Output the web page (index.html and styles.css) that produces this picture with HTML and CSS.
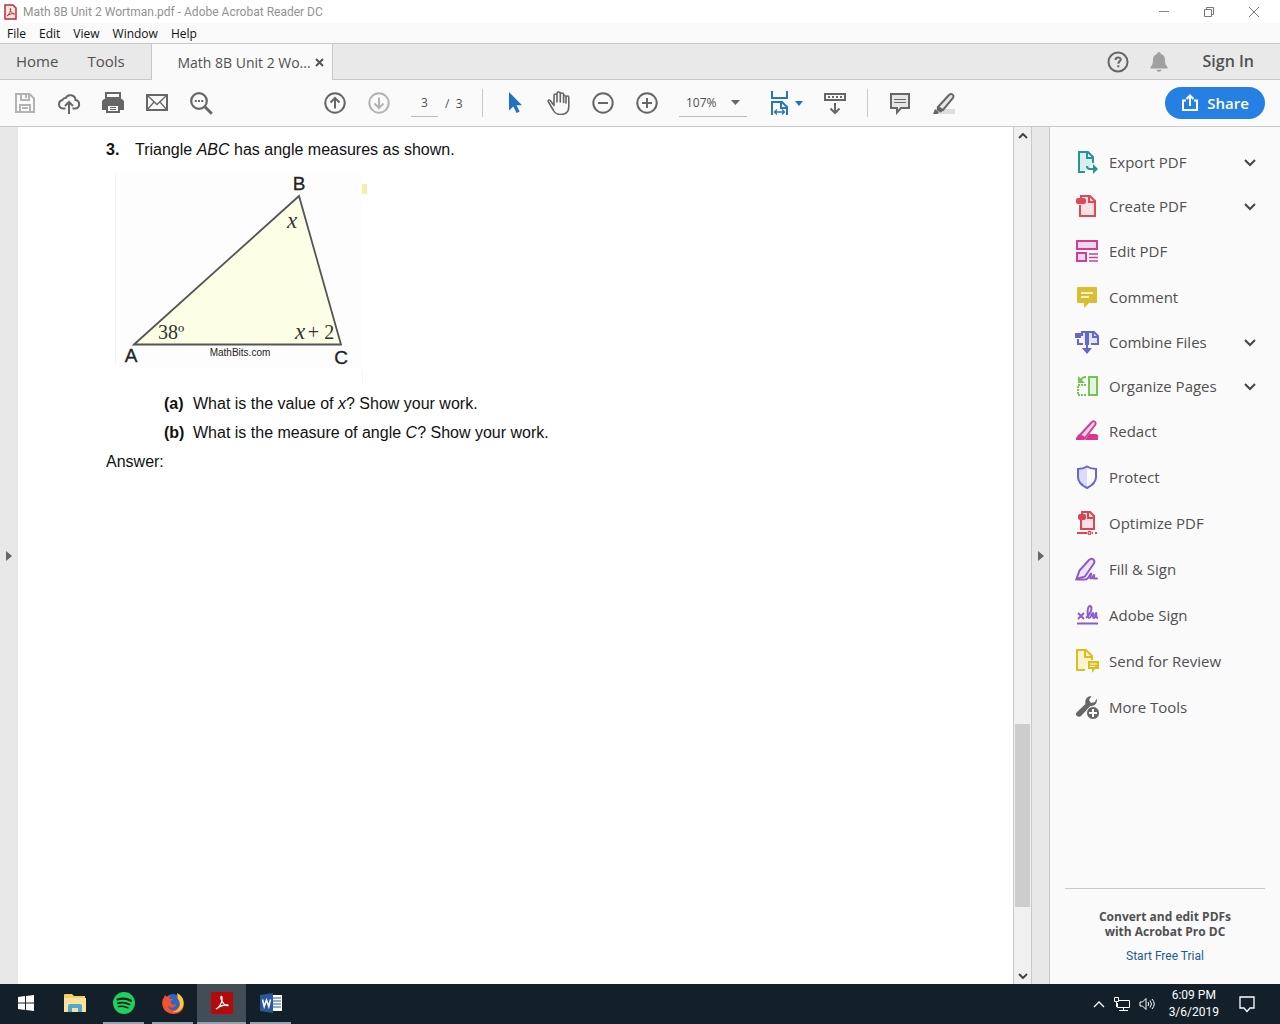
FILE: index.html
```html
<!DOCTYPE html>
<html lang="en">
    <head>
        <meta charset="UTF-8">
        <title>Math 8B Unit 2 Wortman.pdf - Adobe Acrobat Reader DC</title>
        <link rel="stylesheet" href="styles.css">
    </head>
    <body>
        <header class="titlebar">
            <svg class="app-icon" width="13" height="16" viewBox="0 0 13 16"><path d="M1 1h8l3 3v11H1z" fill="#fbe9e9" stroke="#c22a2f" stroke-width="1.5"/><path d="M3 12c2-1 4-5 3.500-7.500C5.500 6 8 10 10.500 10 8 9 5 10.500 3 12z" fill="none" stroke="#c22a2f"/></svg>
            <span class="title">Math 8B Unit 2 Wortman.pdf - Adobe Acrobat Reader DC</span>
            <div class="window-buttons">
                <button aria-label="Minimize"><svg width="12" height="12"><path d="M1 5.500h10" stroke="#888"/></svg></button>
                <button aria-label="Restore"><svg width="12" height="12" fill="none" stroke="#777"><path d="M1.500 3.500h7v7h-7zM3.500 3.500v-2h7v7h-2"/></svg></button>
                <button aria-label="Close"><svg width="12" height="12"><path d="M1 1l10 10M11 1L1 11" stroke="#777"/></svg></button>
            </div>
        </header>

        <nav class="menubar">
            <a href="#">File</a>
            <a href="#">Edit</a>
            <a href="#">View</a>
            <a href="#">Window</a>
            <a href="#">Help</a>
        </nav>

        <div class="tabbar">
            <a class="tab" href="#">Home</a>
            <a class="tab tab-tools" href="#">Tools</a>
            <div class="tab-open">
                <a href="#">Math 8B Unit 2 Wo...</a>
                <button aria-label="Close tab"><svg width="9" height="9"><path d="M1 1l7 7M8 1L1 8" stroke="#555" stroke-width="2"/></svg></button>
            </div>
            <div class="account">
                <button class="help" aria-label="Help"><svg width="22" height="22" fill="none" stroke="#666" stroke-width="2"><circle cx="11" cy="11" r="9.500"/><path d="M8.500 9c0-3.500 5.200-3.200 5.200-.5 0 1.800-2.400 1.900-2.400 4.300M11.300 14.200v2"/></svg></button>
                <button aria-label="Notifications"><svg width="18" height="20"><path d="M9 0c1.200 0 1.700.8 1.700 1.800C13.800 2.600 15 5 15 8c0 4 1 5.500 2.500 7v1.500H.5V15C2 13.500 3 12 3 8c0-3 1.200-5.400 4.300-6.200C7.300.8 7.800 0 9 0zM6.500 17.700h5c-.5 2.700-4.500 2.700-5 0z" fill="#a0a0a0"/></svg></button>
                <a class="sign-in" href="#">Sign In</a>
            </div>
        </div>

        <div class="toolbar">
            <button aria-label="Save"><svg width="24" height="24" fill="none" stroke="#b3b3b3" stroke-width="2"><path d="M3 3h13.500L21 7.500V21H3zM8 3v6h8V3M7 21v-7h10v7"/><path d="M13 4v3M9 17h6" /></svg></button>
            <button aria-label="Upload"><svg width="24" height="24" fill="none" stroke="#666" stroke-width="2"><path d="M8.500 17.500H6A4.300 4.300 0 0 1 5.500 9 3.200 3.200 0 0 1 8.700 7 5.200 5.200 0 0 1 18.500 9a4.300 4.300 0 0 1 0 8.500h-3M12 23V11M8 15l4-4 4 4"/></svg></button>
            <button aria-label="Print"><svg width="24" height="24"><path d="M5 2h14v5H5z" fill="#fafafa" stroke="#666" stroke-width="2"/><path d="M3 8h18l2 2v9h-4v-5H5v5H1v-9z" fill="#666"/><path d="M6 14h12v7H6z" fill="#fafafa" stroke="#666" stroke-width="2"/><path d="M9 16.500h6M9 18.500h6" stroke="#666"/></svg></button>
            <button aria-label="Email"><svg width="24" height="24" fill="none" stroke="#666"><path d="M2 4h20v15H2z" stroke-width="2"/><path d="M2.500 4.500l9.500 9 9.500-9M2.500 18.500L9 11M21.500 18.500L15 11" stroke-width="1.300"/></svg></button>
            <button aria-label="Find"><svg width="24" height="24" fill="none" stroke="#666"><circle cx="10" cy="10" r="7.800" stroke-width="2.200"/><path d="M15.800 15.800l7 7" stroke-width="3"/><path d="M5.800 10h2M9 10h2M12.200 10h2" stroke-width="2"/></svg></button>

            <button class="page-up" aria-label="Previous page"><svg width="24" height="24" fill="none" stroke="#666" stroke-width="2"><circle cx="12" cy="12" r="9.700"/><path d="M12 17.500V7.500M7.500 11.500L12 7l4.500 4.500"/></svg></button>
            <button aria-label="Next page"><svg width="24" height="24" fill="none" stroke="#b3b3b3" stroke-width="2"><circle cx="12" cy="12" r="9.700"/><path d="M12 6.500v10M7.500 12.500L12 17l4.500-4.500"/></svg></button>
            <div class="page-number">
                <input type="text" value="3" aria-label="Page number">
                <span>/&nbsp; 3</span>
            </div>
            <div class="separator"></div>
            <button aria-label="Select"><svg width="24" height="24"><path d="M6 1v18.500l4.300-4 3.300 6.500 3-1.500-3.100-6.300H19z" fill="#2170c4"/></svg></button>
            <button aria-label="Hand"><svg width="24" height="24" fill="none" stroke="#666" stroke-width="1.600" stroke-linecap="round"><path d="M7 14.500L3.500 9.800C2 8.200.5 9.300 1.500 11l5 8.500c1.200 2.500 3.500 4 7 4 5 0 8.300-2.500 8.300-8V6.500c0-2-2.800-2-2.800 0V12M7 14V4.500c0-2 3-2 3 0V11M10 10V2.500c0-2 3.300-2 3.300 0V11M13.300 3.500c0-2 3.300-2 3.300 0L19 5.500M16.600 4v7.500"/></svg></button>
            <button aria-label="Zoom out"><svg width="24" height="24" fill="none" stroke="#666" stroke-width="2"><circle cx="12" cy="12" r="9.700"/><path d="M7 12h10"/></svg></button>
            <button aria-label="Zoom in"><svg width="24" height="24" fill="none" stroke="#666" stroke-width="2"><circle cx="12" cy="12" r="9.700"/><path d="M7 12h10M12 7v10"/></svg></button>
            <div class="zoom-level">
                <select aria-label="Zoom level"><option>107%</option></select>
                <svg width="9" height="5"><path d="M0 0h9L4.500 5z" fill="#666"/></svg>
            </div>
            <button class="fit" aria-label="Fit width">
                <svg width="24" height="26" fill="none" stroke="#2a74b8" stroke-width="2"><path d="M4 1v7h15V1M4 25V12h10l5 5v8M13 12v6h6"/><path d="M7 22h9M9 19.500L6.500 22 9 24.500M14 19.500l2.500 2.500-2.500 2.500" stroke-width="1.300"/></svg>
                <svg width="8" height="5"><path d="M0 0h8L4 5z" fill="#2170c4"/></svg>
            </button>
            <button aria-label="Read mode"><svg width="24" height="24" fill="none" stroke="#666" stroke-width="2"><path d="M2 3h20v6H2z"/><path d="M5 6h2M9 6h2M13 6h2M17 6h2M12 12v9M7.500 17.500L12 22l4.500-4.500"/></svg></button>
            <div class="separator"></div>
            <button aria-label="Comment"><svg width="24" height="24"><path d="M3 3h18v14h-8l-4 4.500V17H3z" fill="#e6e6e6" stroke="#666" stroke-width="2"/><path d="M6 8.500h12M6 11.500h12" stroke="#666"/></svg></button>
            <button aria-label="Highlight"><svg width="24" height="24"><path d="M10 18h13v5H4z" fill="#ddd"/><path d="M6 16L16.500 4.500c2.500-3 6.500-.5 4.300 2.700L11 19z" fill="#e6e6e6" stroke="#666" stroke-width="2"/><path d="M5.500 15l6 4.500-3 2-4-2.500zM3 18l4 3.200L5.500 23H1z" fill="#666"/></svg></button>
            <button class="share">
                <svg width="18" height="18" fill="none" stroke="#fff" stroke-width="2"><path d="M5 6.500H2V16h14V6.500h-3M9 12V2M5.500 5L9 1.500 12.500 5"/></svg>
                Share
            </button>
        </div>

        <main class="workspace">
            <button class="gutter" aria-label="Show navigation pane"><svg width="6" height="12"><path d="M0 1l6 5-6 5z" fill="#666"/></svg></button>

            <section class="page">
                <p class="question"><b>3.</b>Triangle <i>ABC</i> has angle measures as shown.</p>
                <svg class="figure" width="262" height="216" viewBox="0 0 262 216">
                    <rect x="10" y="4" width="246" height="196" fill="#fdfdfd"/>
                    <path d="M9.500 4v194M256.500 202v14" stroke="#f3f3f3"/>
                    <path d="M28 176.500L193 28l42 148.500z" fill="#fdfee6" stroke="#555" stroke-width="1.800"/>
                    <rect x="256" y="16" width="5" height="10" fill="#f0f0a8"/>
                    <g class="vertex">
                        <text x="193" y="22">B</text>
                        <text x="25" y="194">A</text>
                        <text x="235" y="196">C</text>
                    </g>
                    <g class="angle">
                        <text class="variable" x="186" y="60">x</text>
                        <text x="65" y="171">38º</text>
                        <text class="variable" x="194" y="171">x</text>
                        <text x="215" y="171">+ 2</text>
                    </g>
                    <text class="credit" x="134" y="188">MathBits.com</text>
                </svg>
                <p class="part"><b>(a)</b>What is the value of <i>x</i>? Show your work.</p>
                <p class="part"><b>(b)</b>What is the measure of angle <i>C</i>? Show your work.</p>
                <p class="answer">Answer:</p>
            </section>

            <div class="scrollbar">
                <svg width="10" height="6" fill="none" stroke="#444" stroke-width="2"><path d="M1 5l4-4 4 4"/></svg>
                <div class="track"><div class="thumb"></div></div>
                <svg width="10" height="6" fill="none" stroke="#444" stroke-width="2"><path d="M1 1l4 4 4-4"/></svg>
            </div>
            <button class="gutter gutter-right" aria-label="Hide tools pane"><svg width="6" height="12"><path d="M0 1l6 5-6 5z" fill="#666"/></svg></button>

            <aside class="tools">
                <ul>
                    <li class="expandable">
                        <svg width="24" height="24" fill="none" stroke="#2a9590" stroke-width="2"><path d="M10 22H4V2h9l5 5v6" fill="#d9eeee"/><path d="M12 2v6h6M12 16c0 2 1 3 3 3h6"/><path d="M18 14l5 5-5 5z" fill="#2a9590" stroke="none"/></svg>
                        <a href="#">Export PDF</a>
                        <svg class="chevron" width="14" height="9"><path d="M2 2l5 5 5-5"/></svg>
                    </li>
                    <li class="expandable">
                        <svg width="24" height="24" fill="none" stroke="#df4857" stroke-width="2"><path d="M5 11v11h15V7l-5-5H6v3" fill="#fbe1e4"/><path d="M14 2v6h6"/><rect x="2" y="5" width="8" height="4" rx="1" fill="#df4857"/></svg>
                        <a href="#">Create PDF</a>
                        <svg class="chevron" width="14" height="9"><path d="M2 2l5 5 5-5"/></svg>
                    </li>
                    <li>
                        <svg width="24" height="24" fill="#fad5eb" stroke="#cf3f93" stroke-width="2"><rect x="2" y="2" width="20" height="8"/><rect x="2" y="14" width="9" height="8"/><path d="M14 15h9M14 18.500h9M14 22h9" stroke-width="1.300"/></svg>
                        <a href="#">Edit PDF</a>
                    </li>
                    <li>
                        <svg width="24" height="24"><path d="M3 2h18a1 1 0 0 1 1 1v14a1 1 0 0 1-1 1h-7l-5 5v-5H3a1 1 0 0 1-1-1V3a1 1 0 0 1 1-1z" fill="#d9bd32"/><path d="M6 8h12M6 12h8" stroke="#fff" stroke-width="1.500"/></svg>
                        <a href="#">Comment</a>
                    </li>
                    <li class="expandable">
                        <svg width="24" height="24" fill="none" stroke="#6667cc" stroke-width="2"><path d="M8 14H3V9M11 15V2H7v4" fill="#e5e5fa"/><path d="M13 15V2h6l4 4v8h-7" fill="#e5e5fa"/><path d="M18 2v5h5M12 15v5"/><path d="M0 3h6v5H0zM7 18h10l-5 6z" fill="#6667cc" stroke="none"/></svg>
                        <a href="#">Combine Files</a>
                        <svg class="chevron" width="14" height="9"><path d="M2 2l5 5 5-5"/></svg>
                    </li>
                    <li class="expandable">
                        <svg width="24" height="24" fill="none" stroke="#78c257" stroke-width="2"><rect x="14" y="3" width="8" height="18" fill="#e4f5dc"/><path d="M11 11H3v10h9" stroke-dasharray="2 1"/><path d="M3 2v7h7z" fill="#78c257" stroke="none"/><path d="M5 7q2-4 6-4"/></svg>
                        <a href="#">Organize Pages</a>
                        <svg class="chevron" width="14" height="9"><path d="M2 2l5 5 5-5"/></svg>
                    </li>
                    <li>
                        <svg width="24" height="24"><path d="M14 15h7l2 1v5H10z" fill="#d93787"/><path d="M5 16L16.500 3.500c2-2.500 5.500-.3 3.500 2.500L10 19z" fill="#fad5eb" stroke="#cf3f93" stroke-width="2"/><path d="M4 15l6.500 5L9 21H1v-2z" fill="#d93787"/></svg>
                        <a href="#">Redact</a>
                    </li>
                    <li>
                        <svg width="24" height="24"><path d="M12 1.500c3 2 6 2.500 9 2.500v8c0 5-4 8.500-9 11-5-2.500-9-6-9-11V4c3 0 6-.5 9-2.500z" fill="#fafafa"/><path d="M12 2v21c-5-2.500-9-6-9-11V4c3 0 6-.5 9-2z" fill="#dcdcf6"/><path d="M12 1.500c3 2 6 2.500 9 2.500v8c0 5-4 8.500-9 11-5-2.500-9-6-9-11V4c3 0 6-.5 9-2.500z" fill="none" stroke="#6667cc" stroke-width="2"/></svg>
                        <a href="#">Protect</a>
                    </li>
                    <li>
                        <svg width="24" height="24" fill="none" stroke="#d84553" stroke-width="2"><path d="M6 9v9h13V5l-4-4H7v2" fill="#fbe1e4"/><path d="M13 1v6h6M2 22h10M17 22h1M20 22h2"/><circle cx="14.500" cy="22" r="1.500" stroke-width="1.300"/><rect x="4" y="4" width="6" height="4" rx="1" fill="#d84553"/></svg>
                        <a href="#">Optimize PDF</a>
                    </li>
                    <li>
                        <svg width="24" height="24" fill="none" stroke="#8a5bc9" stroke-width="2" stroke-linecap="round"><path d="M1.500 22l3-8.500L14 3c3-3 7 .5 4.500 4L10 19.500z" fill="#eee3fa"/><path d="M2 22.500h8c4 0 5-6 6-6s-2 5 0 5 2-3.500 3-3.500-1 3.500 0 3.500h3"/></svg>
                        <a href="#">Fill &amp; Sign</a>
                    </li>
                    <li>
                        <svg width="24" height="24" fill="none" stroke="#8a5bc9" stroke-width="2"><path d="M2 20.500h21M3 10l6 6M9 10l-6 6M11 15c5-4 7-11 4-12-3 0-3 12-1 12s3-5 4-5-1 5 1 5 1-5 2-5-1 5 2 5"/></svg>
                        <a href="#">Adobe Sign</a>
                    </li>
                    <li>
                        <svg width="24" height="24" fill="none" stroke="#dcbd1b" stroke-width="2"><path d="M10 21H2V1h9l6 6v4" fill="#fbf4cf"/><path d="M10 1v7h7"/><path d="M13 12h11v8h-4l-3 4v-4h-4z" fill="#dcbd1b" stroke="none"/><path d="M15 15h7M15 17.500h5" stroke="#fff" stroke-width="1"/></svg>
                        <a href="#">Send for Review</a>
                    </li>
                    <li>
                        <svg width="24" height="24"><path d="M1.500 17.500l9-8.500c-1-4 1.500-8 6-8L14 5l2 3 4-1 1.500-3.500c1.500 4-1.500 8-6 7.500l-9.500 10c-2.500 2-6.500-1-4.500-3.500z" fill="#666"/><circle cx="18" cy="18" r="6.500" fill="#666" stroke="#fafafa"/><path d="M14 18h8M18 14v8" stroke="#fff" stroke-width="2"/></svg>
                        <a href="#">More Tools</a>
                    </li>
                </ul>
                <div class="promo">
                    <strong>Convert and edit PDFs<br>with Acrobat Pro DC</strong>
                    <a href="#">Start Free Trial</a>
                </div>
            </aside>
        </main>

        <footer class="taskbar">
            <button aria-label="Start"><svg width="16" height="16" fill="#fff"><path d="M0 2l7-1v6.500H0zM8 .9L16 0v7.500H8zM0 8.500h7V15l-7-1zM8 8.500h8V16l-8-.9z"/></svg></button>
            <button aria-label="File Explorer"><svg width="22" height="20"><path d="M0 2q0-1 1-1h7l2 2h11v16H0z" fill="#f3cd68"/><path d="M0 5h22v14H0z" fill="#fbe29a"/><path d="M4 19v-6q0-2 2-2h10q2 0 2 2v6h-4v-4H8v4z" fill="#4fa9cf"/></svg></button>
            <button class="running" aria-label="Spotify"><svg width="22" height="22" fill="none" stroke="#14221a" stroke-linecap="round"><circle cx="11" cy="11" r="11" fill="#1ed05e" stroke="none"/><path d="M4.500 7.500c4.500-1.300 9.500-1 13.500 1.300" stroke-width="2.200"/><path d="M5 11.200c4-1.100 8-.7 11.500 1.300" stroke-width="1.800"/><path d="M5.500 14.600c3.500-.8 6.500-.5 9.500 1.200" stroke-width="1.500"/></svg></button>
            <button class="running" aria-label="Firefox"><svg width="22" height="22"><circle cx="11" cy="11" r="9" fill="#2867c9"/><path d="M3 3l2 2c1-1 3-1.500 4-1.200C7 5 7 6 7.500 7H11L8.500 9.500c0 3 3 4 5.500 2.500-1 5-6.500 4.500-8 1 0 5 6 7 9.500 3.500 3.500-4 2-9-1.500-12 6 1 9 7 7.200 11.500C17 26-1 23 .3 10 .4 7 2 6 3 3z" fill="#f4512c"/><path d="M15 1c6 3 7.500 8 6.300 12.500-1.500 5-6.500 7.500-10.800 6.500 9-2 8.500-9.500 5.500-13z" fill="#ffc832"/></svg></button>
            <button class="running current" aria-label="Adobe Acrobat Reader DC"><svg width="22" height="22"><rect width="22" height="22" rx="2" fill="#b30b0b"/><path d="M5 17c3-1 7-7 6-12-1-2-2 1 0 4 2 4 4 5 6 4.500 1-1-6-1.500-12 3.500z" fill="none" stroke="#fff" stroke-width="1.300"/></svg></button>
            <button class="running" aria-label="Word"><svg width="22" height="20"><path d="M10 2h12v16H10z" fill="#fff"/><path d="M12 5h9M12 8h9M12 11h9M12 14h9" stroke="#2b579a"/><path d="M0 2l13-2v20L0 18z" fill="#2b579a"/><path d="M2.500 6.500l1.700 7L6.500 7l2.300 6.500 1.700-7" fill="none" stroke="#fff" stroke-width="1.500"/></svg></button>
            <div class="tray">
                <svg width="12" height="8" fill="none" stroke="#fff" stroke-width="1.300"><path d="M1 7l5-5 5 5"/></svg>
                <svg width="18" height="16" fill="none" stroke="#fff"><path d="M6 4.500h10.500v7H4.500V7M10.500 12v2.500M6 14.500h9M1.500 1.500h4v4h-4zM3.500 6v5"/></svg>
                <svg width="16" height="16" fill="none" stroke="#fff"><path d="M1 6h2.500L7 2.500v11L3.500 10H1zM9 6q1.500 2 0 4M11 4.500q3 3.500 0 7M13 3q4.500 5 0 10"/></svg>
                <time>6:09 PM<br>3/6/2019</time>
                <svg width="16" height="17" fill="none" stroke="#fff" stroke-width="1.300"><path d="M1 1h14v11h-4l-3 3.500L5 12H1z"/></svg>
            </div>
        </footer>
    </body>
</html>
```

FILE: styles.css
```css
*{
    box-sizing: border-box;
}

body{
    margin: 0;
    height: 100vh;
    display: flex;
    flex-direction: column;
    overflow: hidden;
    background: #fafafa;
    color: #505050;
    font-family: "Open Sans", sans-serif;
    font-size: 12px;
}

a{
    color: inherit;
    text-decoration: none;
}

button{
    display: flex;
    align-items: center;
    justify-content: center;
    padding: 0;
    border: 0;
    background: none;
    color: inherit;
    font: inherit;
}

svg{
    flex: none;
}

/* window chrome */

.titlebar{
    display: flex;
    align-items: center;
    height: 23px;
    padding: 0 4px;
    background: white;
    color: #929292;
    font-family: Roboto, sans-serif;
}

.title{
    margin-left: 6px;
}

.window-buttons{
    display: flex;
    margin-left: auto;
}

.window-buttons button{
    width: 45px;
    height: 20px;
}

.menubar{
    display: flex;
    align-items: center;
    gap: 13px;
    height: 20px;
    padding: 0 7px;
    color: #111;
}

.tabbar{
    display: flex;
    align-items: stretch;
    height: 37px;
    border-top: 1px solid #c8c8c8;
    border-bottom: 1px solid #c8c8c8;
    background: #e9e9e9;
    font-size: 15px;
    line-height: 35px;
}

.tab{
    padding-left: 16px;
}

.tab-tools{
    width: 93px;
    padding-left: 29px;
}

.tab-open{
    display: flex;
    align-items: center;
    gap: 4px;
    height: 36px;
    padding: 0 8px 0 25px;
    border-left: 1px solid #c8c8c8;
    border-right: 1px solid #c8c8c8;
    background: #fafafa;
    font-size: 14px;
}

.account{
    display: flex;
    align-items: center;
    gap: 21px;
    margin-left: auto;
    padding-right: 26px;
}

.sign-in{
    margin-left: 14px;
    font-size: 16px;
    font-weight: 600;
}

/* toolbar */

.toolbar{
    display: flex;
    align-items: center;
    gap: 20px;
    height: 47px;
    padding: 0 15px 0 13px;
    border-bottom: 1px solid #c8c8c8;
}

.toolbar .page-up{
    margin-left: 90px;
}

.page-number{
    display: flex;
    align-items: center;
    gap: 7px;
    width: 51px;
    white-space: nowrap;
}

.page-number input{
    width: 27px;
    height: 28px;
    padding: 0;
    border: 0;
    border-bottom: 1px solid #bbb;
    background: none;
    color: inherit;
    font: inherit;
    text-align: center;
}

.separator{
    width: 1px;
    height: 28px;
    background: #c8c8c8;
}

.zoom-level{
    display: flex;
    align-items: center;
    width: 68px;
    height: 28px;
    padding: 0 7px;
    border-bottom: 1px solid #bbb;
}

.zoom-level select{
    flex: 1;
    min-width: 0;
    padding: 0;
    border: 0;
    appearance: none;
    background: none;
    color: inherit;
    font: inherit;
}

.fit{
    gap: 3px;
    width: 36px;
}

.share{
    gap: 8px;
    width: 100px;
    height: 32px;
    margin-left: auto;
    border-radius: 16px;
    background: #2680e3;
    color: white;
    font-size: 15px;
    font-weight: 600;
}

/* document area */

.workspace{
    display: flex;
    flex: 1;
    min-height: 0;
}

.gutter{
    width: 18px;
    background: #e8e8e8;
}

.gutter-right{
    width: 19px;
    border-left: 1px solid #c8c8c8;
    border-right: 1px solid #c8c8c8;
}

.page{
    flex: 1;
    padding: 10px 0 0 88px;
    background: white;
    color: #111;
    font: 16px/26px "Liberation Sans", Arial, sans-serif;
}

.page p{
    margin: 0;
}

.question b{
    display: inline-block;
    width: 29px;
}

.figure{
    display: block;
    margin: 5px 0 7px;
}

.part{
    padding: 0 0 3px 58px;
}

.part b{
    display: inline-block;
    width: 29px;
}

.vertex{
    font: 19px "Liberation Sans", Arial, sans-serif;
    fill: #222;
    stroke: #222;
    stroke-width: 0.3;
    text-anchor: middle;
}

.angle{
    font: 20px "Liberation Serif", serif;
    fill: #333;
    text-anchor: middle;
}

.variable{
    font-size: 23px;
    font-style: italic;
}

.credit{
    font: 10px "Liberation Sans", Arial, sans-serif;
    fill: #222;
    text-anchor: middle;
}

.scrollbar{
    display: flex;
    flex-direction: column;
    align-items: center;
    width: 18px;
    padding: 6px 0 5px;
    border-left: 1px solid #c8c8c8;
    background: #f0f0f0;
}

.track{
    display: flex;
    flex-direction: column;
    flex: 1;
    width: 15px;
    padding: 4px 0;
}

.track::before{
    content: "";
    flex: 578;
}

.track::after{
    content: "";
    flex: 62;
}

.thumb{
    flex: 182;
    background: #cdcdcd;
}

/* tools pane */

.tools{
    display: flex;
    flex-direction: column;
    width: 230px;
    padding: 13px 15px 0;
}

.tools ul{
    margin: 0;
    padding: 0;
    list-style: none;
    font-size: 15px;
}

.tools li{
    display: flex;
    align-items: center;
    gap: 10px;
    height: 46px;
    padding: 0 8px 0 10px;
}

.tools .expandable{
    height: 44px;
}

.chevron{
    margin-left: auto;
    fill: none;
    stroke: #444;
    stroke-width: 2;
}

.promo{
    display: flex;
    flex-direction: column;
    align-items: center;
    gap: 10px;
    height: 96px;
    margin-top: auto;
    padding-top: 20px;
    border-top: 1px solid #c8c8c8;
    line-height: 15px;
    text-align: center;
}

.promo a{
    color: #1a5a96;
    font-family: Roboto, sans-serif;
}

/* taskbar */

.taskbar{
    display: flex;
    align-items: stretch;
    height: 40px;
    padding: 0 25px 0 1px;
    background: #13202a;
    color: white;
}

.taskbar button{
    width: 49px;
    border-bottom: 2px solid transparent;
}

.taskbar .running{
    width: 41px;
    margin: 0 4px;
    border-color: #94a3af;
}

.taskbar .current{
    width: 49px;
    margin: 0;
    background: #434d55;
}

.tray{
    display: flex;
    align-items: center;
    gap: 8px;
    margin-left: auto;
}

.tray time{
    margin: 0 12px 0 6px;
    font-family: Roboto, sans-serif;
    line-height: 17px;
    text-align: center;
}
```
